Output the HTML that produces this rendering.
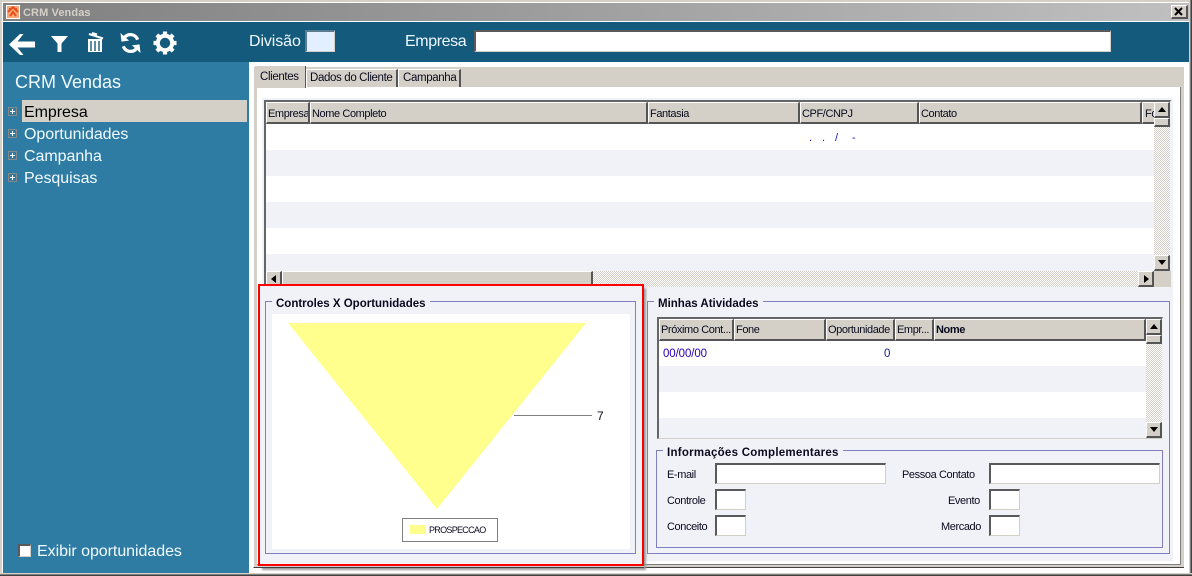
<!DOCTYPE html>
<html><head><meta charset="utf-8"><style>
html,body{margin:0;padding:0;background:#d4d0c8}
#w{position:relative;width:1192px;height:576px;overflow:hidden;font-family:"Liberation Sans",sans-serif;font-size:11px;letter-spacing:-.4px;color:#0a0a1e}
#w div,#w span.a,#w svg{position:absolute;box-sizing:border-box}
.t{white-space:nowrap;line-height:14px}
.hd{background:#d4d0c8;border-top:1px solid #fff;border-left:1px solid #fff;border-right:2px solid #555;border-bottom:2px solid #555;white-space:nowrap;overflow:hidden;padding-left:2px;line-height:18px}
.in{background:#fff;border-top:2px solid #5a5a5a;border-left:2px solid #5a5a5a;border-right:1px solid #d4d0c8;border-bottom:1px solid #d4d0c8}
.btn{background:#d4d0c8;border-top:1px solid #fff;border-left:1px solid #fff;border-right:2px solid #555;border-bottom:2px solid #555}
.ck{background:repeating-conic-gradient(#fff 0 25%,#d4d0c8 0 50%) 0 0/2px 2px}
.gl{border:1px solid #8080c0}
.gt{font-weight:bold;font-size:11.5px;letter-spacing:0;background:#f1f2f8;padding:0 4px;white-space:nowrap;line-height:14px}
.tree{font-size:16px;letter-spacing:-.05px;color:#f2fbff;white-space:nowrap;line-height:20px}
.tab{font-size:11.5px;letter-spacing:-.36px}
.pl{width:9px;height:9px;left:8px;border:1px solid #888;background:#2e7ba3}
.pl:after{content:"";position:absolute;left:1px;top:3px;width:5px;height:1px;background:#fff}
.pl:before{content:"";position:absolute;left:3px;top:1px;width:1px;height:5px;background:#fff}
</style></head><body><div id="w">
<!-- frame -->
<div style="left:0;top:0;width:1192px;height:576px;background:#fff"></div>
<div style="left:0;top:0;width:1192px;height:2px;background:#d4d0c8"></div>
<div style="left:0;top:0;width:2px;height:576px;background:#d4d0c8"></div>
<div style="left:1189px;top:0;width:3px;height:576px;background:linear-gradient(90deg,#d4d0c8 0 1px,#808080 1px 2px,#404040 2px)"></div>
<div style="left:0;top:573px;width:1192px;height:3px;background:linear-gradient(#d4d0c8 0 1px,#808080 1px 2px,#404040 2px)"></div>
<!-- title -->
<div style="left:3px;top:3px;width:1186px;height:18px;background:linear-gradient(90deg,#808080,#c0c0c0)"></div>
<div style="left:6px;top:5px;width:14px;height:14px;background:#fff"></div>
<svg style="left:7px;top:6px" width="12" height="12" viewBox="0 0 12 12"><rect width="12" height="12" fill="#f6a878"/><path d="M1 6L6 1L11 6M3 10L6 6L9 10M2 3H4M8 3H10" stroke="#e8501a" stroke-width="2" fill="none"/></svg>
<div class="t" style="left:23px;top:6px;font-weight:bold;font-size:11px;letter-spacing:.1px;color:#d4d0c8">CRM Vendas</div>
<div class="btn" style="left:1171px;top:5px;width:17px;height:14px"></div>
<svg style="left:1174px;top:7px" width="10" height="9" viewBox="0 0 10 9"><path d="M1 1L8 8M8 1L1 8" stroke="#000" stroke-width="2"/></svg>
<!-- toolbar -->
<div style="left:3px;top:22px;width:1186px;height:40px;background:#145a7c"></div>
<svg style="left:9px;top:34px" width="27" height="21" viewBox="0 0 27 21"><path d="M0 10.500L11 0H14.500L8.500 7.500H26V13.500H8.500L14.500 21H11Z" fill="#fff"/></svg>
<svg style="left:50px;top:36px" width="19" height="16" viewBox="0 0 19 16"><path d="M1 0H18L11.500 7.500V16H7.500V7.500Z" fill="#fff"/></svg>
<svg style="left:87px;top:32px" width="17" height="21" viewBox="0 0 17 21"><path d="M1 7H15V20H1Z" fill="#fff"/><path d="M4 9V19M8 9V19M12 9V19" stroke="#145a7c" stroke-width="1.400"/><path d="M2 2L16 6.500M5 1L10 2.500" stroke="#fff" stroke-width="2"/></svg>
<svg style="left:120px;top:33px" width="21" height="20" viewBox="0 0 21 21"><path d="M18 7A8 8 0 0 0 4 5" fill="none" stroke="#fff" stroke-width="3.400"/><path d="M0 0L1 9L9 8Z" fill="#fff"/><path d="M3 14A8 8 0 0 0 17 16" fill="none" stroke="#fff" stroke-width="3.400"/><path d="M21 21L20 12L12 13Z" fill="#fff"/></svg>
<svg style="left:153px;top:31px" width="24" height="24" viewBox="0 0 24 24"><circle cx="12" cy="12" r="7.200" fill="none" stroke="#fff" stroke-width="4"/><path d="M12 0.500V6M12 18V23.500M0.500 12H6M18 12H23.500M3.900 3.900L7.800 7.800M16.200 16.200L20.100 20.100M20.100 3.900L16.200 7.800M7.800 16.200L3.900 20.100" stroke="#fff" stroke-width="4.200"/></svg>
<div class="t" style="left:249px;top:33px;font-size:16px;letter-spacing:-.1px;color:#eef8ff;line-height:18px">Divisão</div>
<div style="left:305px;top:30px;width:30px;height:22px;background:#e2efff;border-top:2px solid #5a7a90;border-left:2px solid #5a7a90;border-right:1px solid #d4d0c8;border-bottom:1px solid #d4d0c8"></div>
<div class="t" style="left:405px;top:33px;font-size:16px;letter-spacing:-.4px;color:#eef8ff;line-height:18px">Empresa</div>
<div class="in" style="left:474px;top:30px;width:637px;height:22px"></div>
<!-- sidebar -->
<div style="left:3px;top:62px;width:246px;height:511px;background:#2e7ba3"></div>
<div class="t" style="left:15px;top:72px;font-size:18px;letter-spacing:0;line-height:21px;color:#f2fbff">CRM Vendas</div>
<div style="left:22px;top:100px;width:225px;height:22px;background:#d4d0c8"></div>
<div class="pl" style="top:107px"></div><div class="tree" style="left:24px;top:103px;color:#000">Empresa</div>
<div class="pl" style="top:129px"></div><div class="tree" style="left:24px;top:125px">Oportunidades</div>
<div class="pl" style="top:151px"></div><div class="tree" style="left:24px;top:147px">Campanha</div>
<div class="pl" style="top:173px"></div><div class="tree" style="left:24px;top:169px">Pesquisas</div>
<div class="in" style="left:18px;top:544px;width:13px;height:13px;border-width:2px 1px 1px 2px"></div>
<div class="tree" style="left:37px;top:542px">Exibir oportunidades</div>
<!-- page control -->
<div style="left:253px;top:66px;width:931px;height:502px;background:#d4d0c8;border-top:1px solid #fff;border-left:1px solid #fff;border-bottom:1px solid #404040"></div>
<div style="left:257px;top:87px;width:924px;height:478px;background:#fff;border-right:1px solid #808080;border-bottom:1px solid #808080"></div>
<div style="left:255px;top:66px;width:51px;height:22px;background:#d4d0c8;border-right:1px solid #555"></div>
<div class="t tab" style="left:260px;top:70px">Clientes</div>
<div style="left:306px;top:69px;width:92px;height:18px;background:#d4d0c8;border-top:1px solid #fff;border-left:1px solid #fff;border-right:2px solid #555"></div>
<div class="t tab" style="left:310px;top:71px">Dados do Cliente</div>
<div style="left:398px;top:69px;width:63px;height:18px;background:#d4d0c8;border-top:1px solid #fff;border-left:1px solid #fff;border-right:2px solid #555"></div>
<div class="t tab" style="left:403px;top:71px">Campanha</div>
<div style="left:262px;top:98px;width:911px;height:463px;background:#f1f2f8"></div>
<!-- table 1 -->
<div style="left:264px;top:100px;width:907px;height:187px;background:#fff;border-top:2px solid #666;border-left:2px solid #666;border-right:1px solid #f1f2f8;border-bottom:1px solid #d4d0c8"></div>
<div style="left:266px;top:150px;width:888px;height:26px;background:#f1f2f8"></div>
<div style="left:266px;top:202px;width:888px;height:26px;background:#f1f2f8"></div>
<div style="left:266px;top:254px;width:888px;height:17px;background:#f1f2f8"></div>
<div class="hd" style="left:266px;top:102px;width:44px;height:22px;line-height:22px;padding-left:1px">Empresa</div>
<div class="hd" style="left:310px;top:102px;width:338px;height:22px;line-height:22px;padding-left:1px">Nome Completo</div>
<div class="hd" style="left:648px;top:102px;width:152px;height:22px;line-height:22px;padding-left:1px">Fantasia</div>
<div class="hd" style="left:800px;top:102px;width:119px;height:22px;line-height:22px;padding-left:1px">CPF/CNPJ</div>
<div class="hd" style="left:919px;top:102px;width:223px;height:22px;line-height:22px;padding-left:1px">Contato</div>
<div class="hd" style="left:1142px;top:102px;width:14px;height:22px;line-height:22px;border-right:0">Fo</div>
<div class="ck" style="left:1154px;top:102px;width:16px;height:169px"></div>
<div class="btn" style="left:1154px;top:102px;width:16px;height:16px"></div>
<svg style="left:1158px;top:107px" width="9" height="5"><path d="M4 0L8 5H0Z" fill="#000"/></svg>
<div class="btn" style="left:1154px;top:118px;width:16px;height:9px"></div>
<div class="btn" style="left:1154px;top:255px;width:16px;height:16px"></div>
<svg style="left:1158px;top:260px" width="9" height="5"><path d="M0 0H8L4 5Z" fill="#000"/></svg>
<div class="ck" style="left:266px;top:271px;width:872px;height:16px"></div>
<div class="btn" style="left:266px;top:271px;width:16px;height:16px"></div>
<svg style="left:271px;top:275px" width="5" height="9"><path d="M5 0V8L0 4Z" fill="#000"/></svg>
<div class="btn" style="left:282px;top:271px;width:311px;height:16px"></div>
<div class="btn" style="left:1138px;top:271px;width:16px;height:16px"></div>
<svg style="left:1144px;top:275px" width="5" height="9"><path d="M0 0V8L5 4Z" fill="#000"/></svg>
<div style="left:1154px;top:271px;width:17px;height:16px;background:#d4d0c8"></div>
<div class="t" style="left:809px;top:131px;color:#1010d0">.</div>
<div class="t" style="left:822px;top:131px;color:#1010d0">.</div>
<div class="t" style="left:835px;top:131px;color:#1010d0">/</div>
<div class="t" style="left:852px;top:131px;color:#1010d0">-</div>
<!-- red box -->
<div style="left:260px;top:286px;width:384px;height:282px;box-shadow:2px 2px 2px #999"></div>
<div style="left:260px;top:286px;width:382px;height:278px;background:#f1f2f8"></div>
<!-- group 1 -->
<div class="gl" style="left:265px;top:301px;width:371px;height:253px"></div>
<div class="gt" style="left:272px;top:297px">Controles X Oportunidades</div>
<div style="left:272px;top:314px;width:358px;height:235px;background:#fff"></div>
<svg style="left:272px;top:314px" width="358" height="235"><path d="M16 9H314L165 195Z" fill="#ffff8e"/><path d="M242 101.500H320" stroke="#808080"/></svg>
<div class="t" style="left:597px;top:409px;font-size:12px;letter-spacing:0">7</div>
<div style="left:402px;top:518px;width:96px;height:24px;border:1px solid #808080;background:#fff"></div>
<div style="left:410px;top:525px;width:16px;height:9px;background:#ffff8e"></div>
<div class="t" style="left:429px;top:523px;font-size:9px;letter-spacing:-.7px">PROSPECCAO</div>
<div style="left:258px;top:284px;width:386px;height:282px;border:2px solid #f00"></div>
<!-- group 2 -->
<div class="gl" style="left:647px;top:301px;width:523px;height:253px"></div>
<div class="gt" style="left:654px;top:297px">Minhas Atividades</div>
<div style="left:657px;top:317px;width:506px;height:122px;background:#fff;border-top:2px solid #666;border-left:2px solid #666;border-right:1px solid #f1f2f8;border-bottom:1px solid #d4d0c8"></div>
<div style="left:659px;top:366px;width:487px;height:26px;background:#f1f2f8"></div>
<div style="left:659px;top:418px;width:487px;height:20px;background:#f1f2f8"></div>
<div class="hd" style="left:659px;top:319px;width:75px;height:22px;line-height:20px;padding-left:1px">Próximo Cont...</div>
<div class="hd" style="left:734px;top:319px;width:92px;height:22px;line-height:20px;padding-left:1px">Fone</div>
<div class="hd" style="left:826px;top:319px;width:69px;height:22px;line-height:20px;padding-left:1px">Oportunidade</div>
<div class="hd" style="left:895px;top:319px;width:39px;height:22px;line-height:20px;padding-left:1px">Empr...</div>
<div class="hd" style="left:934px;top:319px;width:212px;height:22px;line-height:20px;padding-left:1px;font-weight:bold">Nome</div>
<div class="ck" style="left:1146px;top:319px;width:16px;height:119px"></div>
<div class="btn" style="left:1146px;top:319px;width:16px;height:16px"></div>
<svg style="left:1150px;top:324px" width="9" height="5"><path d="M4 0L8 5H0Z" fill="#000"/></svg>
<div class="btn" style="left:1146px;top:335px;width:16px;height:9px"></div>
<div class="btn" style="left:1146px;top:422px;width:16px;height:16px"></div>
<svg style="left:1150px;top:427px" width="9" height="5"><path d="M0 0H8L4 5Z" fill="#000"/></svg>
<div class="t" style="left:663px;top:347px;color:#2a00b4;font-size:11.500px;letter-spacing:-.1px">00/00/00</div>
<div class="t" style="left:884px;top:347px;color:#1a1a80;font-size:11.500px">0</div>
<!-- group 3 -->
<div class="gl" style="left:656px;top:450px;width:507px;height:98px"></div>
<div class="gt" style="left:663px;top:446px;letter-spacing:.26px">Informações Complementares</div>
<div class="t" style="left:667px;top:468px">E-mail</div>
<div class="t" style="left:667px;top:494px">Controle</div>
<div class="t" style="left:667px;top:520px">Conceito</div>
<div class="in" style="left:715px;top:463px;width:171px;height:21px"></div>
<div class="in" style="left:715px;top:489px;width:31px;height:21px"></div>
<div class="in" style="left:715px;top:515px;width:31px;height:21px"></div>
<div class="t" style="left:902px;top:468px">Pessoa Contato</div>
<div class="t" style="left:948px;top:494px">Evento</div>
<div class="t" style="left:941px;top:520px">Mercado</div>
<div class="in" style="left:989px;top:463px;width:171px;height:21px"></div>
<div class="in" style="left:989px;top:489px;width:31px;height:21px"></div>
<div class="in" style="left:989px;top:515px;width:31px;height:21px"></div>
</div></body></html>
